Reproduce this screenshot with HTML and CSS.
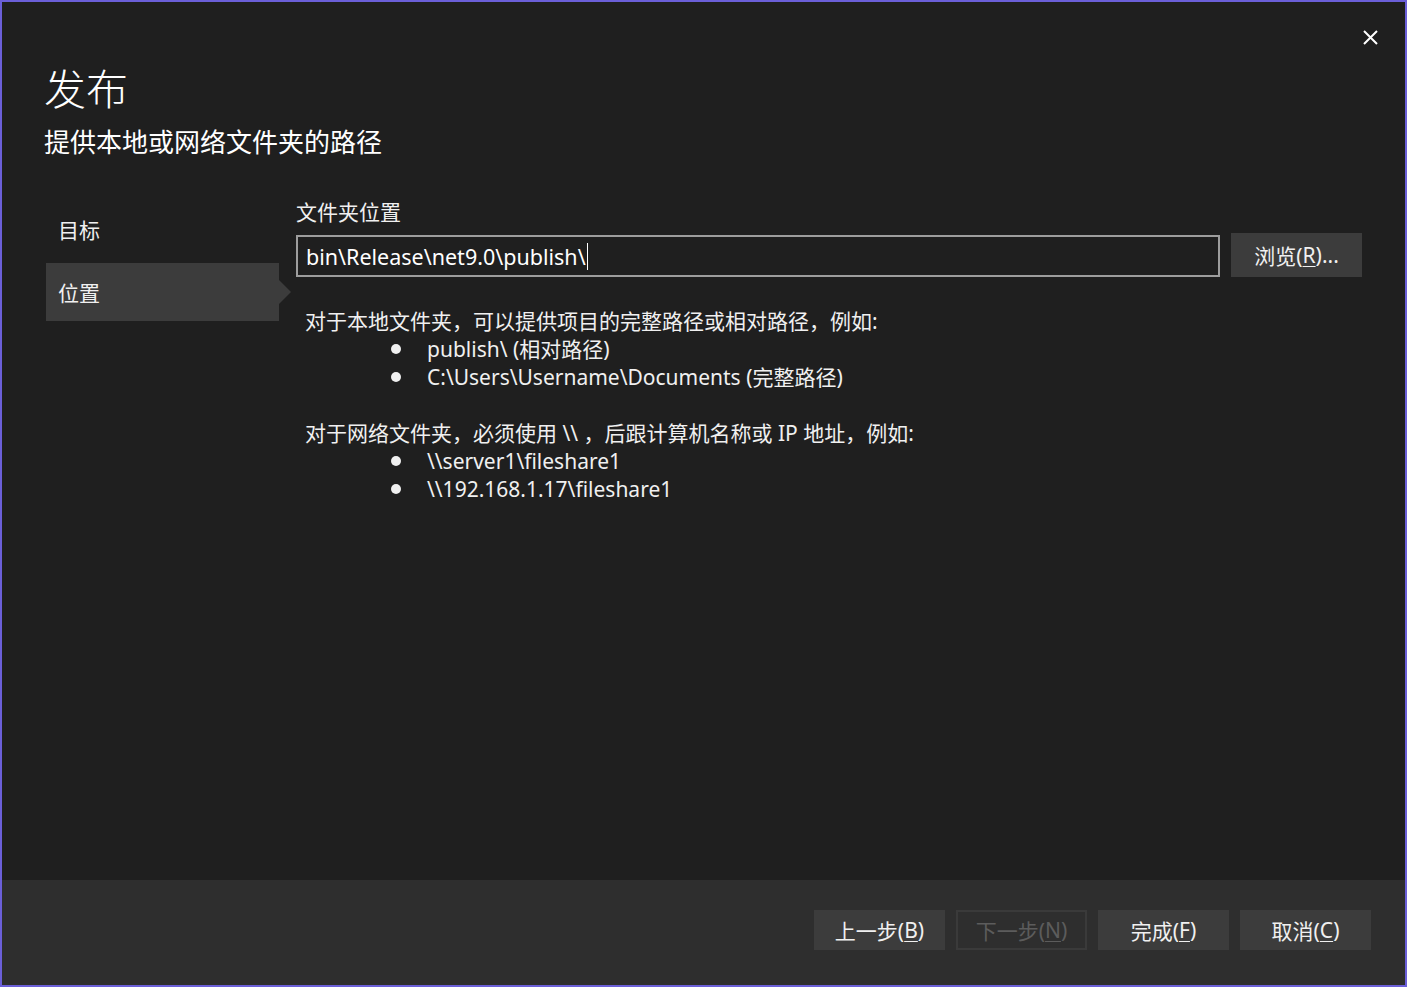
FILE: index.html
```html
<!DOCTYPE html>
<html lang="zh-CN">
<head>
<meta charset="utf-8">
<title>发布</title>
<link rel="stylesheet" href="styles.css">
</head>
<body>
<div class="window">
  <div class="main">
    <button class="close" aria-label="关闭">
      <svg width="15" height="15" viewBox="0 0 15 15"><path d="M1 1 L14 14 M14 1 L1 14" stroke="#ffffff" stroke-width="2" fill="none"/></svg>
    </button>
    <header class="header">
      <h1 class="title">发布</h1>
      <p class="subtitle">提供本地或网络文件夹的路径</p>
    </header>
    <div class="body">
      <nav class="nav">
        <div class="nav-item">目标</div>
        <div class="nav-item selected">位置</div>
      </nav>
      <section class="content">
        <label class="field-label">文件夹位置</label>
        <div class="field-row">
          <div class="input"><span>bin\Release\net9.0\publish\</span><span class="caret"></span></div>
          <button class="btn browse">浏览(<u>R</u>)...</button>
        </div>
        <div class="help">
          <p class="help-line">对于本地文件夹，可以提供项目的完整路径或相对路径，例如:</p>
          <ul class="bullets">
            <li>publish\ (相对路径)</li>
            <li>C:\Users\Username\Documents (完整路径)</li>
          </ul>
          <p class="help-line gap">对于网络文件夹，必须使用 \\ ，后跟计算机名称或 IP 地址，例如:</p>
          <ul class="bullets">
            <li>\\server1\fileshare1</li>
            <li>\\192.168.1.17\fileshare1</li>
          </ul>
        </div>
      </section>
    </div>
  </div>
  <footer class="footer">
    <button class="btn foot">上一步(<u>B</u>)</button>
    <button class="btn foot disabled">下一步(<u>N</u>)</button>
    <button class="btn foot">完成(<u>F</u>)</button>
    <button class="btn foot">取消(<u>C</u>)</button>
  </footer>
</div>
</body>
</html>
```

FILE: styles.css
```css
* { box-sizing: border-box; }
html, body {
  margin: 0;
  padding: 0;
  background: #1f1f1f;
}
body {
  font-family: "Noto Sans", "Noto Sans CJK SC", sans-serif;
  color: #f0f0f0;
}
.window {
  width: 1407px;
  height: 987px;
  border: 2px solid #6b5fd8;
  background: #1f1f1f;
  display: flex;
  flex-direction: column;
  position: relative;
}
.main {
  flex: 1;
  display: flex;
  flex-direction: column;
}
.close {
  position: absolute;
  top: 26px;
  right: 25px;
  width: 19px;
  height: 19px;
  padding: 0;
  border: none;
  background: transparent;
  display: flex;
  align-items: center;
  justify-content: center;
}
.header {
  padding: 57px 0 0 42px;
}
.title {
  margin: 0;
  font-family: "Noto Sans CJK SC", sans-serif;
  font-weight: 300;
  font-size: 42px;
  line-height: 56px;
  color: #ffffff;
}
.subtitle {
  margin: 9px 0 0 0;
  font-family: "Noto Sans CJK SC", sans-serif;
  font-weight: 400;
  font-size: 26px;
  line-height: 34px;
  color: #ffffff;
}
.body {
  display: flex;
  margin-top: 41px;
}
.nav {
  width: 294px;
  padding-left: 44px;
  padding-top: 1px;
  display: flex;
  flex-direction: column;
  gap: 5px;
}
.nav-item {
  width: 233px;
  height: 58px;
  padding-left: 12px;
  display: flex;
  align-items: center;
  font-family: "Noto Sans CJK SC", sans-serif;
  font-size: 21px;
  color: #f0f0f0;
  position: relative;
}
.nav-item.selected {
  background: #3c3c3c;
}
.nav-item.selected::after {
  content: "";
  position: absolute;
  right: -12px;
  top: 50%;
  margin-top: -12px;
  border-left: 12px solid #3c3c3c;
  border-top: 12px solid transparent;
  border-bottom: 12px solid transparent;
}
.content {
  flex: 1;
  padding-right: 43px;
  margin-top: -2px;
}
.field-label {
  display: block;
  font-family: "Noto Sans CJK SC", sans-serif;
  font-size: 21px;
  line-height: 28px;
  color: #f0f0f0;
}
.field-row {
  display: flex;
  align-items: flex-start;
  gap: 11px;
  margin-top: 10px;
}
.input {
  flex: 1;
  height: 42px;
  border: 2px solid #9d9d9d;
  background: #1f1f1f;
  padding-left: 8px;
  display: flex;
  align-items: center;
  font-size: 21.5px;
  color: #ffffff;
  white-space: pre;
}
.caret {
  display: inline-block;
  width: 1px;
  height: 27px;
  background: #ffffff;
  margin-left: 1px;
}
.btn {
  font-family: "Noto Sans", "Noto Sans CJK SC", sans-serif;
  font-size: 21px;
  color: #f0f0f0;
  background: #3c3c3c;
  border: 2px solid #3c3c3c;
  padding: 0;
  display: flex;
  align-items: center;
  justify-content: center;
}
.btn u {
  text-underline-offset: 3px;
  text-decoration-thickness: 1px;
}
.browse {
  width: 131px;
  height: 44px;
  margin-top: -2px;
}
.help {
  margin-top: 30px;
  padding-left: 9px;
  font-size: 21px;
  line-height: 28px;
  color: #f0f0f0;
}
.help-line {
  margin: 0;
}
.help-line.gap {
  margin-top: 28px;
}
.bullets {
  list-style: none;
  margin: 0;
  padding: 0 0 0 86px;
}
.bullets li {
  display: flex;
  align-items: center;
}
.bullets li::before {
  content: "";
  width: 10px;
  height: 10px;
  border-radius: 50%;
  background: #f0f0f0;
  margin-right: 26px;
}
.footer {
  height: 105px;
  background: #2e2e2e;
  display: flex;
  justify-content: flex-end;
  align-items: flex-start;
  padding-top: 30px;
  padding-right: 34px;
  gap: 11px;
}
.foot {
  width: 131px;
  height: 40px;
}
.foot.disabled {
  background: transparent;
  border-color: #3a3a3a;
  color: #5c5c5c;
}
```
